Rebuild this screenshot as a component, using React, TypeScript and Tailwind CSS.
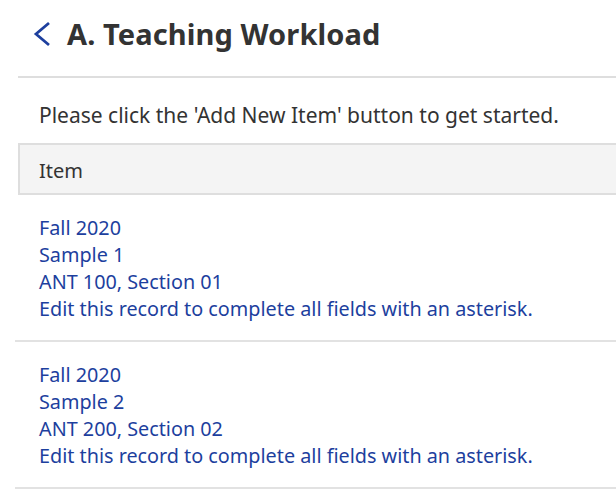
import React from 'react';

const records = [
  { term: 'Fall 2020', title: 'Sample 1', course: 'ANT 100, Section 01' },
  { term: 'Fall 2020', title: 'Sample 2', course: 'ANT 200, Section 02' },
];

const App: React.FC = () => {
  return (
    <div
      className="w-[616px] h-[492px] overflow-hidden bg-white text-[#333]"
      style={{ fontFamily: '"Noto Sans", "Open Sans", sans-serif' }}
    >
      {/* Page header */}
      <div className="flex items-center h-[76px] pl-[31px] gap-[13px]">
        <svg width="23" height="26" viewBox="0 0 23 26" className="mt-[-9px]">
          <path d="M18 2 L5 13 L18 24" fill="none" stroke="#1d3f9e" strokeWidth="2.8" />
        </svg>
        <h1 className="mt-[-9px] text-[29px] font-bold tracking-[0.1px] text-[#333]">
          A. Teaching Workload
        </h1>
      </div>

      <div className="ml-[18px] w-[620px]">
        <div className="border-t-2 border-[#dedede]" />

        <p className="pt-[23px] pb-[14px] pl-[21px] text-[21px] leading-[28px] text-[#333]">
          Please click the 'Add New Item' button to get started.
        </p>

        {/* Table header */}
        <div className="h-[52px] flex items-center pt-[3px] pl-[19px] border-2 border-[#dedede] bg-[#f4f4f4] text-[20px]">
          Item
        </div>

        {/* Records */}
        <div className="-ml-[3px]">
          {records.map((r) => (
            <div key={r.title} className="border-b-2 border-[#e2e2e2] pt-[19px] pb-[18px] pl-[24px]">
              <div className="text-[19.8px] leading-[27px] text-[#1d3f9e]">
                <div>{r.term}</div>
                <div>{r.title}</div>
                <div>{r.course}</div>
                <div>Edit this record to complete all fields with an asterisk.</div>
              </div>
            </div>
          ))}
        </div>
      </div>
    </div>
  );
};

export default App;
